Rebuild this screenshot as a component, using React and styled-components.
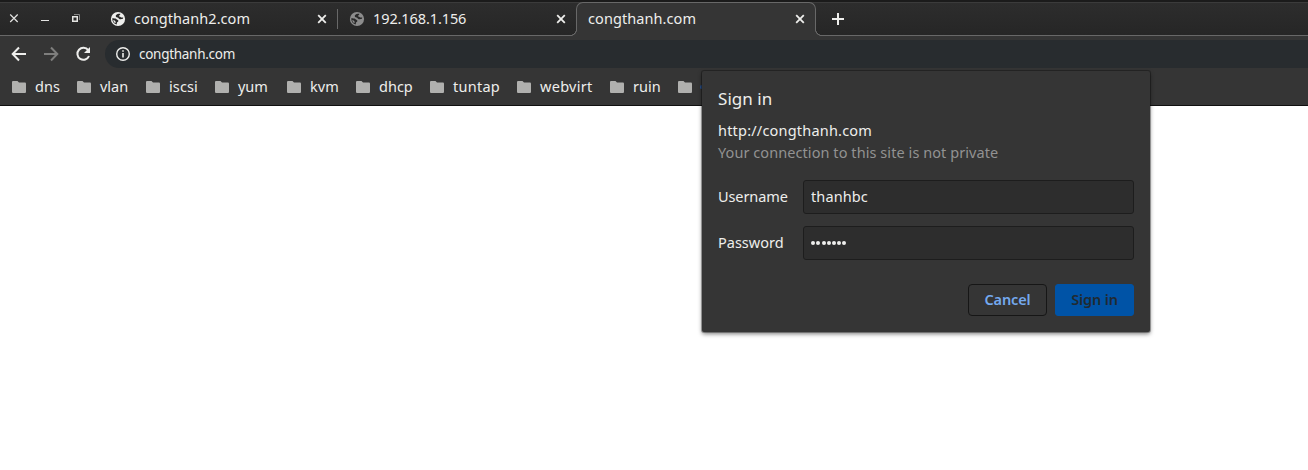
import React from 'react';
import styled, { createGlobalStyle } from 'styled-components';

const GlobalStyle = createGlobalStyle`
  * { box-sizing: border-box; }
  html, body { margin: 0; background: #fff; overflow: hidden; }
  body, input, button { font-family: 'Noto Sans', 'Open Sans', sans-serif; }
`;

const Browser = styled.div`
  position: relative;
  height: 470px;
  font-size: 14.5px;
  color: #eeeeec;
`;

const TabStrip = styled.div`
  display: flex;
  height: 36px;
  border-top: 2px solid #1b1b1b;
  border-bottom: 1px solid #686868;
  background: linear-gradient(#3b3b3b 1px, #2d2d2d 1px, #262626);
`;

const WindowControls = styled.div`
  display: flex;
  width: 101px;
  flex: none;
`;

const Tab = styled.div`
  position: relative;
  display: flex;
  align-items: center;
  flex: none;
  width: ${(p) => p.$width}px;
  height: 34px;
  padding: 0 ${(p) => p.$right || 10}px 0 ${(p) => p.$left || 9}px;
`;

const ActiveTab = styled(Tab)`
  padding: 0 10px 1px 11px;
  border: 1px solid #686868;
  border-bottom: 0;
  border-radius: 7px 7px 0 0;
  background: #353535;

  &::before,
  &::after {
    content: '';
    position: absolute;
    bottom: 0;
    width: 7px;
    height: 7px;
  }
  &::before {
    left: -7px;
    background: radial-gradient(circle at 0 0, #272727 5.7px, #686868 6.2px, #686868 6.8px, #353535 7.3px);
  }
  &::after {
    right: -7px;
    background: radial-gradient(circle at 100% 0, #272727 5.7px, #686868 6.2px, #686868 6.8px, #353535 7.3px);
  }
`;

const TabTitle = styled.span`
  flex: 1;
  margin-left: ${(p) => p.$gap || 0}px;
  padding-bottom: 2px;
  line-height: 20px;
  white-space: nowrap;
  letter-spacing: ${(p) => p.$spacing || 0}px;
`;

const TabDivider = styled.i`
  flex: none;
  width: 1px;
  height: 20px;
  margin-top: 7px;
  background: #686868;
`;

const NewTab = styled.div`
  display: flex;
  padding: 11px 0 0 16px;
`;

const Toolbar = styled.div`
  display: flex;
  height: 32px;
  padding-top: 4px;
  background: #353535;
`;

const NavButtons = styled.div`
  display: flex;
  align-items: center;
  gap: 16px;
  width: 105px;
  padding-left: 11px;
  flex: none;
`;

const AddressBar = styled.div`
  display: flex;
  align-items: center;
  flex: 1;
  height: 28px;
  padding-left: 10px;
  gap: 8px;
  border-radius: 14px 0 0 14px;
  background: #282c2f;
  font-size: 13.5px;
  letter-spacing: -0.28px;
`;

const BookmarksBar = styled.div`
  display: flex;
  height: 38px;
  padding: 0 0 1px 12px;
  border-bottom: 1px solid #101010;
  background: #353535;
`;

const Bookmark = styled.div`
  display: flex;
  align-items: center;
  flex: none;
  gap: 9px;
  width: ${(p) => p.$width}px;
  letter-spacing: ${(p) => p.$spacing}px;
  white-space: nowrap;

  svg { margin-top: 2px; flex: none; }
`;

const HiddenBookmark = styled.i`
  width: 3px;
  height: 4px;
  margin-top: 1px;
  margin-left: -1px;
  border-radius: 2px;
  background: #294f88;
`;

const Dialog = styled.form`
  position: absolute;
  left: 702px;
  top: 71px;
  width: 448px;
  height: 261px;
  padding: 16px 16px 16px;
  border-radius: 2px;
  background: #353535;
  box-shadow: 0 0 0 1px rgba(0, 0, 0, 0.28), 0 2px 4px rgba(0, 0, 0, 0.5);
`;

const Heading = styled.div`
  font-size: 17px;
  line-height: 24px;
  letter-spacing: 0.05px;
`;

const Origin = styled.div`
  margin-top: 8px;
  line-height: 22px;
  letter-spacing: 0.2px;
`;

const Warning = styled.div`
  line-height: 22px;
  letter-spacing: 0.07px;
  color: #929292;
`;

const Field = styled.label`
  display: grid;
  grid-template-columns: 85px 331px;
  align-items: center;
  margin-top: ${(p) => p.$top}px;
`;

const FieldLabel = styled.span`
  padding-bottom: 2px;
  letter-spacing: ${(p) => p.$spacing}px;
`;

const Input = styled.input`
  height: 34px;
  padding: 0 7px 2px;
  border: 1px solid #1d1d1d;
  border-radius: 3px;
  outline: 0;
  background: #2d2d2d;
  color: #eeeeec;
  font-size: 14.5px;
  letter-spacing: 0.1px;
`;

const Mask = styled.div`
  display: flex;
  align-items: center;
  gap: 1.1px;
  height: 34px;
  padding: 0 7.4px;
  border: 1px solid #1d1d1d;
  border-radius: 3px;
  background: #2d2d2d;
`;

const Dot = styled.i`
  width: 4px;
  height: 4px;
  border-radius: 50%;
  background: #eeeeec;
`;

const Actions = styled.div`
  display: flex;
  justify-content: flex-end;
  gap: 8px;
  margin-top: 24px;
`;

const Button = styled.button`
  width: 79px;
  height: 32px;
  padding: 0 0 2px;
  border: 1px solid ${(p) => (p.$primary ? '#0053a6' : '#161616')};
  border-radius: ${(p) => (p.$primary ? 3 : 4)}px;
  background: ${(p) => (p.$primary ? '#0053a6' : '#353535')};
  color: ${(p) => (p.$primary ? '#202a31' : '#74a9ee')};
  font-size: 14.5px;
  font-weight: 600;
  letter-spacing: -0.15px;
`;

const CloseIcon = () => (
  <svg width="10" height="10" viewBox="0 0 10 10" stroke="#eeeeec" strokeWidth="1.8">
    <path d="M1.2 1.2 8.8 8.8M8.8 1.2 1.2 8.8" />
  </svg>
);

const GlobeIcon = ({ color }) => (
  <svg width="16" height="16" viewBox="0 0 16 16">
    <circle cx="8" cy="8" r="7.1" fill={color} />
    <path
      d="M9.300 2.500C9.700 3.800 8.600 4.600 7.500 4.800c.1 1-.4 1.400-1.300 1.500v.9h3.300c.8 0 1.200.5 1.200 1.200v1h1.400c.7 0 1.100.3 1.300.8 1.300-2.600.1-5.900-1.700-6.700.2 1.200-.7 1.600-2 1.700L8.400 6.300l1.900-.2C11.600 5 10.900 3 9.300 2.500Z"
      fill={color}
    />
    <path
      d="M10.300 2.700C8.500 2.700 6.200 3 5.800 4.500c-.3 1.300.6 2 1.700 2 .9 0 .9.900 1.800 1.400.8.500 2.700.2 3.700-.2l.2-1.200c-1.200.2-2.100.2-2.700-.4-.5-.6-1.600-.3-1.700-1 0-.8 1.700-.7 1.500-2.400Z"
      fill="#292929"
    />
    <path
      d="M2.200 7.300c1.900.2 3.300-.1 4.300.9.600.6 1.900.6 1.900 1.800 0 1.100-1.400.9-1.500 1.900l-.1 1.700C4 13 2.100 10.600 2.200 7.300Z"
      fill="#292929"
    />
    <path d="M3.200 8.900c.2 1.600 1 2.600 2.300 3.200l.2-1.300c-.4-1-1.500-1.800-2.500-1.900Z" fill={color} />
  </svg>
);

const FolderIcon = () => (
  <svg width="14" height="12" viewBox="0 0 14 12">
    <path d="M1.3 0h4.200l1.500 1.500h5.700C13.500 1.500 14 2 14 2.800v7.900c0 .7-.5 1.300-1.300 1.300H1.300C.6 12 0 11.500 0 10.700V1.300C0 .5.500 0 1.300 0Z" fill="#b0b0ae" />
  </svg>
);

const bookmarks = [
  ['dns', 65, 0], ['vlan', 69, 0], ['iscsi', 69, 0.1], ['yum', 72, -0.1],
  ['kvm', 69, 0.1], ['dhcp', 74, 0], ['tuntap', 87, 0.25], ['webvirt', 93, 0.3],
  ['ruin', 68, 0],
];

export default function App() {
  return (
    <>
      <GlobalStyle />
      <Browser>
        <TabStrip>
          <WindowControls>
            <svg width="90" height="33" viewBox="0 2 90 33" fill="none" stroke="#e4e4e2">
              <path d="M10.200 14.500 17.700 22M17.700 14.500 10.200 22" strokeWidth="1.200" />
              <path d="M41 20.500h8" />
              <path d="M72.750 16.750h4.500v4.500h-4.500Z" strokeWidth="1.500" />
              <path d="M74 14.500h5.500V20" stroke="#858585" />
            </svg>
          </WindowControls>
          <Tab $width={236}>
            <GlobeIcon color="#eeeeec" />
            <TabTitle $gap={8} $spacing={0.05}>congthanh2.com</TabTitle>
            <CloseIcon />
          </Tab>
          <TabDivider />
          <Tab $width={238} $left={11} $right={10}>
            <GlobeIcon color="#8c8c8c" />
            <TabTitle $gap={8} $spacing={-0.1}>192.168.1.156</TabTitle>
            <CloseIcon />
          </Tab>
          <ActiveTab $width={240}>
            <TabTitle $spacing={0.08}>congthanh.com</TabTitle>
            <CloseIcon />
          </ActiveTab>
          <NewTab>
            <svg width="12" height="12" viewBox="0 0 12 12" stroke="#eeeeec" strokeWidth="2">
              <path d="M6 0v12M0 6h12" />
            </svg>
          </NewTab>
        </TabStrip>
        <Toolbar>
          <NavButtons>
            <svg width="16" height="16" viewBox="0 0 16 16" fill="none" stroke="#eeeeec" strokeWidth="2">
              <path d="M15 8H2.500M8 1.500 1.700 8 8 14.500" />
            </svg>
            <svg width="16" height="16" viewBox="0 0 16 16" fill="none" stroke="#7e7e7d" strokeWidth="2">
              <path d="M1 8h12.500M8 1.500 14.300 8 8 14.500" />
            </svg>
            <svg width="16" height="16" viewBox="0 0 16 16" fill="none" stroke="#eeeeec" strokeWidth="2">
              <path d="M13.200 4.200A6 6 0 1 0 14 10" />
              <path d="M15 1v6H9Z" fill="#eeeeec" stroke="none" />
            </svg>
          </NavButtons>
          <AddressBar>
            <svg width="16" height="16" viewBox="0 0 16 16" fill="none" stroke="#eeeeec">
              <circle cx="8" cy="8" r="6.300" strokeWidth="1.400" />
              <path d="M8 7v4.500M8 4.200v1.600" strokeWidth="1.600" />
            </svg>
            <span>congthanh.com</span>
          </AddressBar>
        </Toolbar>
        <BookmarksBar>
          {bookmarks.map(([name, width, spacing]) => (
            <Bookmark key={name} $width={width} $spacing={spacing}>
              <FolderIcon />
              <span>{name}</span>
            </Bookmark>
          ))}
          <Bookmark $width={30} $spacing={0}>
            <FolderIcon />
            <HiddenBookmark />
          </Bookmark>
        </BookmarksBar>
        <Dialog onSubmit={(e) => e.preventDefault()}>
          <Heading>Sign in</Heading>
          <Origin>http://congthanh.com</Origin>
          <Warning>Your connection to this site is not private</Warning>
          <Field $top={17}>
            <FieldLabel $spacing={-0.1}>Username</FieldLabel>
            <Input defaultValue="thanhbc" />
          </Field>
          <Field $top={12}>
            <FieldLabel $spacing={0}>Password</FieldLabel>
            <Mask>
              {Array.from({ length: 7 }, (_, i) => <Dot key={i} />)}
            </Mask>
          </Field>
          <Actions>
            <Button type="button">Cancel</Button>
            <Button $primary>Sign in</Button>
          </Actions>
        </Dialog>
      </Browser>
    </>
  );
}
